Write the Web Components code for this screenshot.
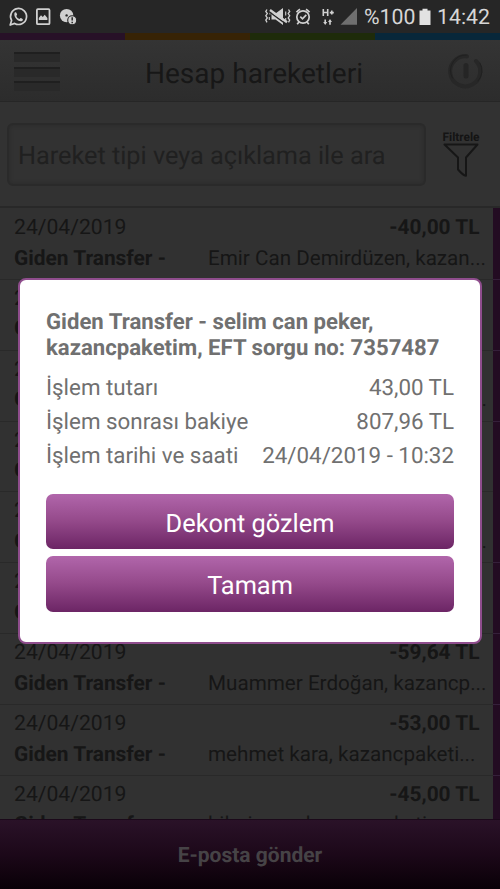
<!DOCTYPE html>
<html lang="tr">
<head>
<meta charset="utf-8">
<title>Hesap hareketleri</title>
<style>
html,body{margin:0;height:100%;overflow:hidden;background:#313131}
body{font-family:Roboto,"Liberation Sans",sans-serif;text-rendering:geometricPrecision}
</style>
</head>
<body>
<bank-app></bank-app>
<script>
const define = (name, html) => customElements.define(name, class extends HTMLElement {
  connectedCallback() {
    if (this.shadowRoot) return;
    const t = document.createElement('template');
    t.innerHTML = typeof html === 'function' ? html(this) : html;
    this.attachShadow({mode: 'open'}).append(t.content.cloneNode(true));
  }
});

define('status-bar', `
<style>
:host{display:flex;height:33px;flex:none;background:#262626;color:#d6d6d6;font-size:21.3px;line-height:36px;white-space:nowrap}
svg{display:block;flex:none}
.pct{margin-left:6px;width:55px}
.time{margin-left:6px}
</style>
<svg width="84" height="33" viewBox="0 0 84 33" fill="none" stroke="#d0d0d0">
  <path d="M10.2 25l1.4-4.6a8 8 0 1 1 3 3z" stroke-width="1.7" stroke-linejoin="round"/>
  <path d="M14.6 12.7c.8-.8 1.6-.5 1.9.3l.6 1.5c.2.5-.6 1-.8 1.4.6 1.5 1.7 2.5 3.2 3.1.5-.3 1-1.2 1.5-.9l1.6.9c.6.4.3 1.5-.5 1.9-3.6 1.7-9.2-4.3-7.5-8.2z" fill="#d0d0d0" stroke="none"/>
  <rect x="36.9" y="9.2" width="12.6" height="15" rx="1" stroke-width="1.8"/>
  <path d="M38.8 20v-2l2.2-2.7 1.8 1.7 1.9-2.3 2.7 3.3v2z" fill="#d0d0d0" stroke="none"/>
  <circle cx="66.6" cy="15.6" r="6.7" fill="#d0d0d0" stroke="none"/>
  <circle cx="66.6" cy="15.4" r="1.2" fill="#262626" stroke="none"/>
  <circle cx="72.2" cy="20.2" r="4.5" fill="#d0d0d0" stroke="#262626" stroke-width="1.1"/>
  <path d="M72.2 17.2v3.300M72.2 21.7v1.5" stroke="#262626" stroke-width="1.5"/>
</svg>
<svg width="274" height="33" viewBox="84 0 274 33" fill="none" stroke="#d0d0d0">
  <path d="M267 9.500l-1.200 2 1.500 2-1.500 2.200 1.500 2.200-1.500 2.200 1.200 2.300M288.500 9.500l1.200 2-1.500 2 1.500 2.200-1.500 2.200 1.500 2.200-1.200 2.300" stroke-width="1.300"/>
  <path d="M270 12.500v2M269.300 17v3M285.700 11.500v4M285.700 18v3" stroke-width="1.100"/>
  <path d="M271.500 13.500h4l7.500-5.500v17l-7.500-5.500h-4z" fill="#d0d0d0" stroke="none"/>
  <path d="M269.500 12l17 12.300" stroke="#262626" stroke-width="1.500"/>
  <path d="M270 10l17 12.300" stroke-width="2.300"/>
  <circle cx="303" cy="17" r="6.200" stroke-width="1.700"/>
  <path d="M300.300 16.700l2.200 2.200 3.800-4M296.500 12.200a9 9 0 0 1 3.500-3M309.500 12.200a9 9 0 0 0-3.500-3M299 22l-1.800 2.300M307 22l1.800 2.300" stroke-width="1.700"/>
  <path d="M323.300 9v7M327.700 9v7M323.300 12.500h4.400M329.800 12.600h4M331.800 10.600v4" stroke-width="1.600"/>
  <path d="M323.200 22l2 3 2-3h-1.200v-2.500h-1.600V22zM328 22l2-3 2 3h-1.200v2.700h-1.600V22z" fill="#d0d0d0" stroke="none"/>
  <path d="M340.500 24.700L357 8v16.700z" fill="#6f6f6f" stroke="none"/>
</svg>
<span class="pct">%100</span>
<svg width="12" height="33" viewBox="418.500 0 12 33"><path d="M419 10.500h3V8.700h5v1.800h3V25h-11z" fill="#e2e2e2"/></svg>
<span class="time">14:42</span>`);

define('brand-stripes', `
<style>
:host{display:flex;height:7px;flex:none}
i{flex:1}
</style>
<i style="background:#271127"></i><i style="background:#372305"></i><i style="background:#1e2b0a"></i><i style="background:#08273a"></i>`);

define('page-header', `
<style>
:host{display:flex;flex:none;box-sizing:border-box;height:62px;align-items:center;background:linear-gradient(#343434,#2c2c2c);border-bottom:1px solid #262626;padding:0 14px;justify-content:space-between}
.menu{display:grid;gap:4.700px;width:46px;padding-top:2px}
.menu i{height:10px;background:linear-gradient(#1f1f1f 0 1.500px,#292929 1.500px)}
h1{margin:6px 0 0;font-weight:400;font-size:28.050px;line-height:34px;color:#171717;flex:1;text-align:center}
svg{display:block}
</style>
<div class="menu"><i></i><i></i><i></i></div>
<h1><slot></slot></h1>
<svg width="38" height="38" viewBox="0 0 38 38" fill="none" stroke-linecap="round">
  <path d="M20.500 4a15 15 0 1 0 9 4.500" transform="translate(-1.500 .5)" stroke="#272727" stroke-width="4"/>
  <path d="M19 3a15.500 15.500 0 0 0-14.500 23M32 11a15 15 0 0 1-2 18" stroke="#202020" stroke-width="1"/>
  <path d="M18 13.500v10.500" stroke="#252525" stroke-width="5"/>
</svg>`);

define('search-bar', `
<style>
:host{display:flex;flex:none;box-sizing:border-box;height:106px;padding:21px 13px 0 7px;background:#323232;border-bottom:2px solid #282828}
.field{box-sizing:border-box;width:419px;height:63px;border:2px solid #2a2a2a;border-radius:6px;box-shadow:inset 0 0 4px #2a2a2a;padding-left:9px;font-size:25.250px;line-height:63px;color:#202020;white-space:nowrap}
.filter{margin-left:16px;width:38px;text-align:center;color:#141414;font-size:11.900px;font-weight:700;line-height:14px;padding-top:7px}
svg{display:block;margin-top:-2px}
</style>
<div class="field">Hareket tipi veya açıklama ile ara</div>
<div class="filter">Filtrele
<svg width="38" height="36" viewBox="0 0 38 36" fill="none" stroke="#161616" stroke-width="2" stroke-linejoin="round"><path d="M2.500 2.500h33L24 15.500v18.300q-3-.6-8-6.300v-12z"/></svg>
</div>`);

define('account-row', el => `
<style>
:host{display:block;flex:none;box-sizing:border-box;height:70.850px;padding:4px 0 0 14px;border-bottom:1.500px solid #292929;color:#161616;font-size:20.900px;line-height:30.600px;white-space:nowrap}
div{display:flex}
.top{justify-content:space-between;padding-right:13.500px}
.date{font-size:21.150px}
b{font-weight:700}
.kind{width:194px;flex:none}
.desc{font-size:20.650px}
.end{margin-left:auto;padding-right:6px}
</style>
<div class="top"><span class="date">24/04/2019</span><b>${el.getAttribute('amount') || ''}</b></div>
<div><b class="kind">Giden Transfer -</b><span class="desc${el.hasAttribute('end') ? ' end' : ''}"><slot></slot></span></div>`);

define('account-list', `
<style>
:host{display:flex;flex:1;min-height:0;overflow:hidden;background:#313131}
.rows{width:493px;padding-top:1px}
.edge{flex:1;background:repeating-linear-gradient(#230c22 0 70px,#35203a 70px 70.850px) 0 1px}
</style>
<div class="rows">
<account-row amount="-40,00 TL">Emir Can Demirdüzen, kazan...</account-row>
<account-row></account-row>
<account-row end>...</account-row>
<account-row></account-row>
<account-row end>...</account-row>
<account-row></account-row>
<account-row amount="-59,64 TL">Muammer Erdoğan, kazancp...</account-row>
<account-row amount="-53,00 TL">mehmet kara, kazancpaketi...</account-row>
<account-row amount="-45,00 TL">hilmi acar, kazancpaketi...</account-row>
</div><div class="edge"></div>`);

define('footer-button', `
<style>
:host{display:flex;flex:none;box-sizing:border-box;height:69px;padding-top:2px;align-items:center;justify-content:center;background:linear-gradient(#2a1228,#1c0819 50%,#090007);box-shadow:0 -1px 0 #1b091a;position:relative;color:#464346;font-size:21px;font-weight:700}
</style><slot></slot>`);

define('action-button', `
<style>
:host{display:block;height:55.300px;border-radius:7px;background:linear-gradient(#b166ab,#954a8b 48%,#6c2565);color:#fff;font-size:25.350px;line-height:60px;text-align:center}
</style><slot></slot>`);

define('detail-line', el => `
<style>:host{display:flex;justify-content:space-between;font-size:22.350px;line-height:34px}</style>
<span>${el.getAttribute('label')}</span><span><slot></slot></span>`);

define('detail-dialog', `
<style>
:host{position:absolute;left:18px;top:278px;width:464px;height:366px;box-sizing:border-box;border:2px solid #8f4d8d;border-radius:8px;background:#fff;color:#707070;padding:28.500px 26px}
h2{margin:0 -10px 9px 0;font-size:22.150px;line-height:26.500px;font-weight:700;white-space:nowrap}
.actions{display:grid;gap:7.300px;margin-top:21.200px}
</style>
<h2>Giden Transfer - selim can peker,<br>kazancpaketim, EFT sorgu no: 7357487</h2>
<detail-line label="İşlem tutarı">43,00 TL</detail-line>
<detail-line label="İşlem sonrası bakiye">807,96 TL</detail-line>
<detail-line label="İşlem tarihi ve saati">24/04/2019 - 10:32</detail-line>
<div class="actions"><action-button>Dekont gözlem</action-button><action-button>Tamam</action-button></div>`);

define('bank-app', `
<style>:host{display:flex;flex-direction:column;position:relative;width:500px;height:889px;overflow:hidden}</style>
<status-bar></status-bar>
<brand-stripes></brand-stripes>
<page-header>Hesap hareketleri</page-header>
<search-bar></search-bar>
<account-list></account-list>
<footer-button>E-posta gönder</footer-button>
<detail-dialog></detail-dialog>`);
</script>
</body>
</html>
